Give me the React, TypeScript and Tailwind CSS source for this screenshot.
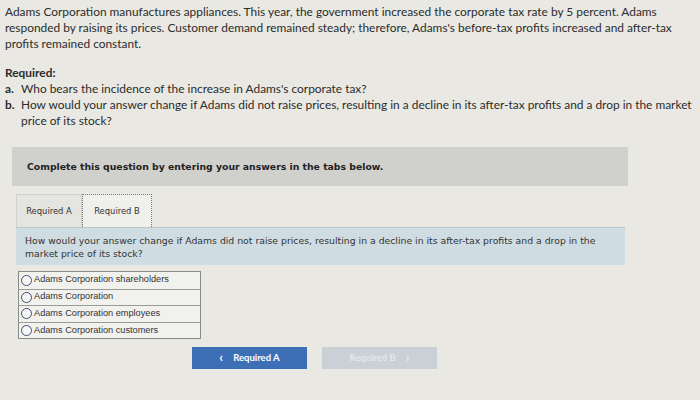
import React from "react";

const options = [
  "Adams Corporation shareholders",
  "Adams Corporation",
  "Adams Corporation employees",
  "Adams Corporation customers",
];

export default function App() {
  return (
    <div className="w-[700px] h-[400px] overflow-hidden bg-[#e9e8e3] text-[#2c2c2c]">
      <div className="pl-[5px] pr-[14px] pt-[4px] text-[11.9px] leading-[16px] font-['Lato',sans-serif]">
        <p>
          Adams Corporation manufactures appliances. This year, the government increased the corporate tax rate by 5 percent. Adams responded by raising its prices. Customer demand remained steady; therefore, Adams's before-tax profits increased and after-tax profits remained constant.
        </p>
        <p className="mt-[13px] font-bold">Required:</p>
        <div className="flex">
          <span className="w-[16px] font-bold">a.</span>
          <span>Who bears the incidence of the increase in Adams's corporate tax?</span>
        </div>
        <div className="flex">
          <span className="w-[16px] shrink-0 font-bold">b.</span>
          <span>
            <span className="whitespace-nowrap">How would your answer change if Adams did not raise prices, resulting in a decline in its after-tax profits and a drop in the market</span>
            <br />
            price of its stock?
          </span>
        </div>
      </div>

      <div className="ml-[12px] mt-[18px] w-[616px] h-[39px] bg-[#d0d0cd] flex items-center pl-[15px] font-['DejaVu_Sans',sans-serif] text-[9.3px] font-bold text-[#222]">
        Complete this question by entering your answers in the tabs below.
      </div>

      <div className="ml-[16px] mt-[8px] w-[609px] font-['DejaVu_Sans',sans-serif]">
        <div className="flex h-[33px] items-stretch">
          <div className="w-[66px] border border-b-0 border-[#cfcfcb] bg-[#e4e4e0] flex items-center justify-center text-[8.4px] text-[#333]">
            Required A
          </div>
          <div className="w-[70px] border border-dotted border-b-0 border-[#777] bg-[#efefec] flex items-center justify-center text-[8.4px] text-[#333]">
            Required B
          </div>
        </div>
        <div className="h-[38px] bg-[#cfdde3] border-t border-[#b9c6cc] pl-[9px] pt-[6px] text-[9.3px] leading-[13px] text-[#333]">
          How would your answer change if Adams did not raise prices, resulting in a decline in its after-tax profits and a drop in the market price of its stock?
        </div>
      </div>

      <div className="ml-[18px] mt-[6px] w-[183px] border border-[#8a8a88] bg-[#f1f1ee] font-['Liberation_Sans',sans-serif]">
        {options.map((o, i) => (
          <div
            key={o}
            className={`h-[16.6px] flex items-center pl-[2px] text-[9.2px] text-[#333] ${i > 0 ? "border-t border-[#9a9a98]" : ""}`}
          >
            <span className="w-[11px] h-[11px] rounded-full border border-[#3f4f7a] bg-[#f7f7f5] mr-[2px] shrink-0" />
            {o}
          </div>
        ))}
      </div>

      <div className="ml-[192px] mt-[8px] flex gap-[15px] font-['Lato',sans-serif]">
        <div className="w-[115px] h-[22px] bg-[#3d6fb6] flex items-center justify-center gap-[10px] text-white text-[9.5px] font-bold">
          <span className="text-[13px] leading-none -mt-[2px]">&lsaquo;</span>
          <span>Required A</span>
        </div>
        <div className="w-[115px] h-[22px] bg-[#c9d0d6] flex items-center justify-center gap-[10px] text-[#e4e8ec] text-[9.5px] font-bold">
          <span>Required B</span>
          <span className="text-[13px] leading-none -mt-[2px]">&rsaquo;</span>
        </div>
      </div>
    </div>
  );
}
